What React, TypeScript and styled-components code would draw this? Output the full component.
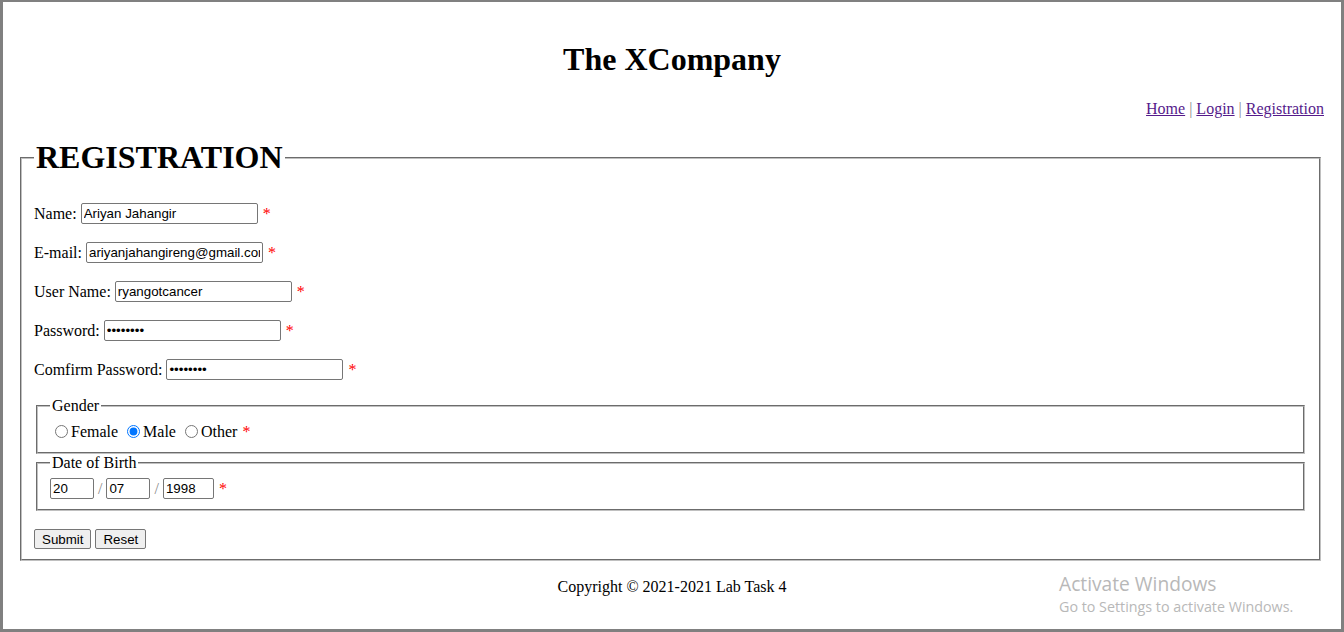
import React from "react";
import styled, { createGlobalStyle } from "styled-components";

const Global = createGlobalStyle`
  html, body { margin: 0; padding: 0; background: #fff; }
  body { font-family: "Liberation Serif", "Times New Roman", serif; font-size: 16px; color: #000; }
`;

const Frame = styled.div`
  position: relative;
  box-sizing: border-box;
  height: 632px;
  border: 3px solid #808080;
  border-top-width: 2px;
  overflow: hidden;
`;

const Title = styled.h1`
  margin: 39px 0 0;
  font-size: 32px;
  font-weight: bold;
  text-align: center;
  line-height: 37px;
`;

const Nav = styled.nav`
  margin-top: 22px;
  padding-right: 17px;
  text-align: right;
  line-height: 18px;
`;

const NavLink = styled.a`
  color: #551a8b;
  text-decoration: underline;
`;

const Sep = styled.span`
  color: #8a8a8a;
`;

const Fieldset = styled.fieldset`
  margin: 21px 20px 0 17px;
  padding: 0 12px 10px;
  border: 2px groove #c0c0c0;
  min-width: 0;
`;

const BigLegend = styled.legend`
  padding: 0 2px;
  font-size: 32px;
  font-weight: bold;
  line-height: 37px;
`;

const Body = styled.div`
  padding-top: 26px;
`;

const Row = styled.div`
  display: flex;
  align-items: center;
  gap: 4px;
  height: 23px;
  margin-bottom: 16px;
`;

const TextInput = styled.input<{ $w?: number }>`
  box-sizing: border-box;
  width: ${(p) => p.$w ?? 177}px;
  height: 21px;
  padding: 1px 2px;
  border: 1px solid #767676;
  border-radius: 2px;
  font-family: "Liberation Sans", Arial, sans-serif;
  font-size: 13.33px;
  color: #000;
  background: #fff;
`;

const Req = styled.span`
  color: #ff0000;
  margin-left: 1px;
`;

const Group = styled.div`
  margin-top: 2px;
`;

const SubFieldset = styled.fieldset`
  margin: 0 2px;
  padding: 6px 12px 10px;
  border: 2px groove #c0c0c0;
  min-width: 0;
`;

const SmallLegend = styled.legend`
  padding: 0 2px;
  line-height: 18px;
`;

const RadioLine = styled.div`
  display: flex;
  align-items: center;
  height: 21px;
`;

const Radio = styled.input`
  margin: 0 3px 0 5px;
  width: 13px;
  height: 13px;
`;

const RadioText = styled.span`
  margin-right: 4px;
`;

const DateLine = styled.div`
  display: flex;
  align-items: center;
  gap: 4px;
  height: 21px;
`;

const Slash = styled.span`
  color: #8a8a8a;
`;

const Actions = styled.div`
  display: flex;
  gap: 4px;
  margin-top: 18px;
  height: 20px;
`;

const Button = styled.button`
  box-sizing: border-box;
  height: 20px;
  padding: 0 7px;
  border: 1px solid #767676;
  border-radius: 2px;
  background: #efefef;
  font-family: "Liberation Sans", Arial, sans-serif;
  font-size: 13.33px;
  color: #000;
`;

const Footer = styled.footer`
  margin-top: 17px;
  text-align: center;
  line-height: 18px;
`;

const Watermark = styled.div`
  position: absolute;
  left: 1056px;
  top: 569px;
  font-family: "Open Sans", "Noto Sans", sans-serif;
  color: #b8b8b8;
`;

const WmTitle = styled.div`
  font-size: 19.2px;
  line-height: 26px;
`;

const WmSub = styled.div`
  font-size: 14.3px;
  line-height: 19px;
`;

export default function App() {
  return (
    <>
      <Global />
      <Frame>
        <Title>The XCompany</Title>
        <Nav>
          <NavLink href="#">Home</NavLink> <Sep>|</Sep> <NavLink href="#">Login</NavLink>{" "}
          <Sep>|</Sep> <NavLink href="#">Registration</NavLink>
        </Nav>
        <Fieldset>
          <BigLegend>REGISTRATION</BigLegend>
          <Body>
            <Row>
              Name: <TextInput defaultValue="Ariyan Jahangir" />
              <Req>*</Req>
            </Row>
            <Row>
              E-mail: <TextInput defaultValue="ariyanjahangireng@gmail.com" />
              <Req>*</Req>
            </Row>
            <Row>
              User Name: <TextInput defaultValue="ryangotcancer" />
              <Req>*</Req>
            </Row>
            <Row>
              Password: <TextInput type="password" defaultValue="12345678" />
              <Req>*</Req>
            </Row>
            <Row>
              Comfirm Password: <TextInput type="password" defaultValue="12345678" />
              <Req>*</Req>
            </Row>
            <Group>
              <SubFieldset>
                <SmallLegend>Gender</SmallLegend>
                <RadioLine>
                  <Radio type="radio" name="g" />
                  <RadioText>Female</RadioText>
                  <Radio type="radio" name="g" defaultChecked />
                  <RadioText>Male</RadioText>
                  <Radio type="radio" name="g" />
                  <RadioText>Other</RadioText>
                  <Req>*</Req>
                </RadioLine>
              </SubFieldset>
              <SubFieldset>
                <SmallLegend>Date of Birth</SmallLegend>
                <DateLine>
                  <TextInput $w={44} defaultValue="20" />
                  <Slash>/</Slash>
                  <TextInput $w={44} defaultValue="07" />
                  <Slash>/</Slash>
                  <TextInput $w={51} defaultValue="1998" />
                  <Req>*</Req>
                </DateLine>
              </SubFieldset>
            </Group>
            <Actions>
              <Button type="submit">Submit</Button>
              <Button type="reset">Reset</Button>
            </Actions>
          </Body>
        </Fieldset>
        <Footer>Copyright © 2021-2021 Lab Task 4</Footer>
        <Watermark>
          <WmTitle>Activate Windows</WmTitle>
          <WmSub>Go to Settings to activate Windows.</WmSub>
        </Watermark>
      </Frame>
    </>
  );
}
